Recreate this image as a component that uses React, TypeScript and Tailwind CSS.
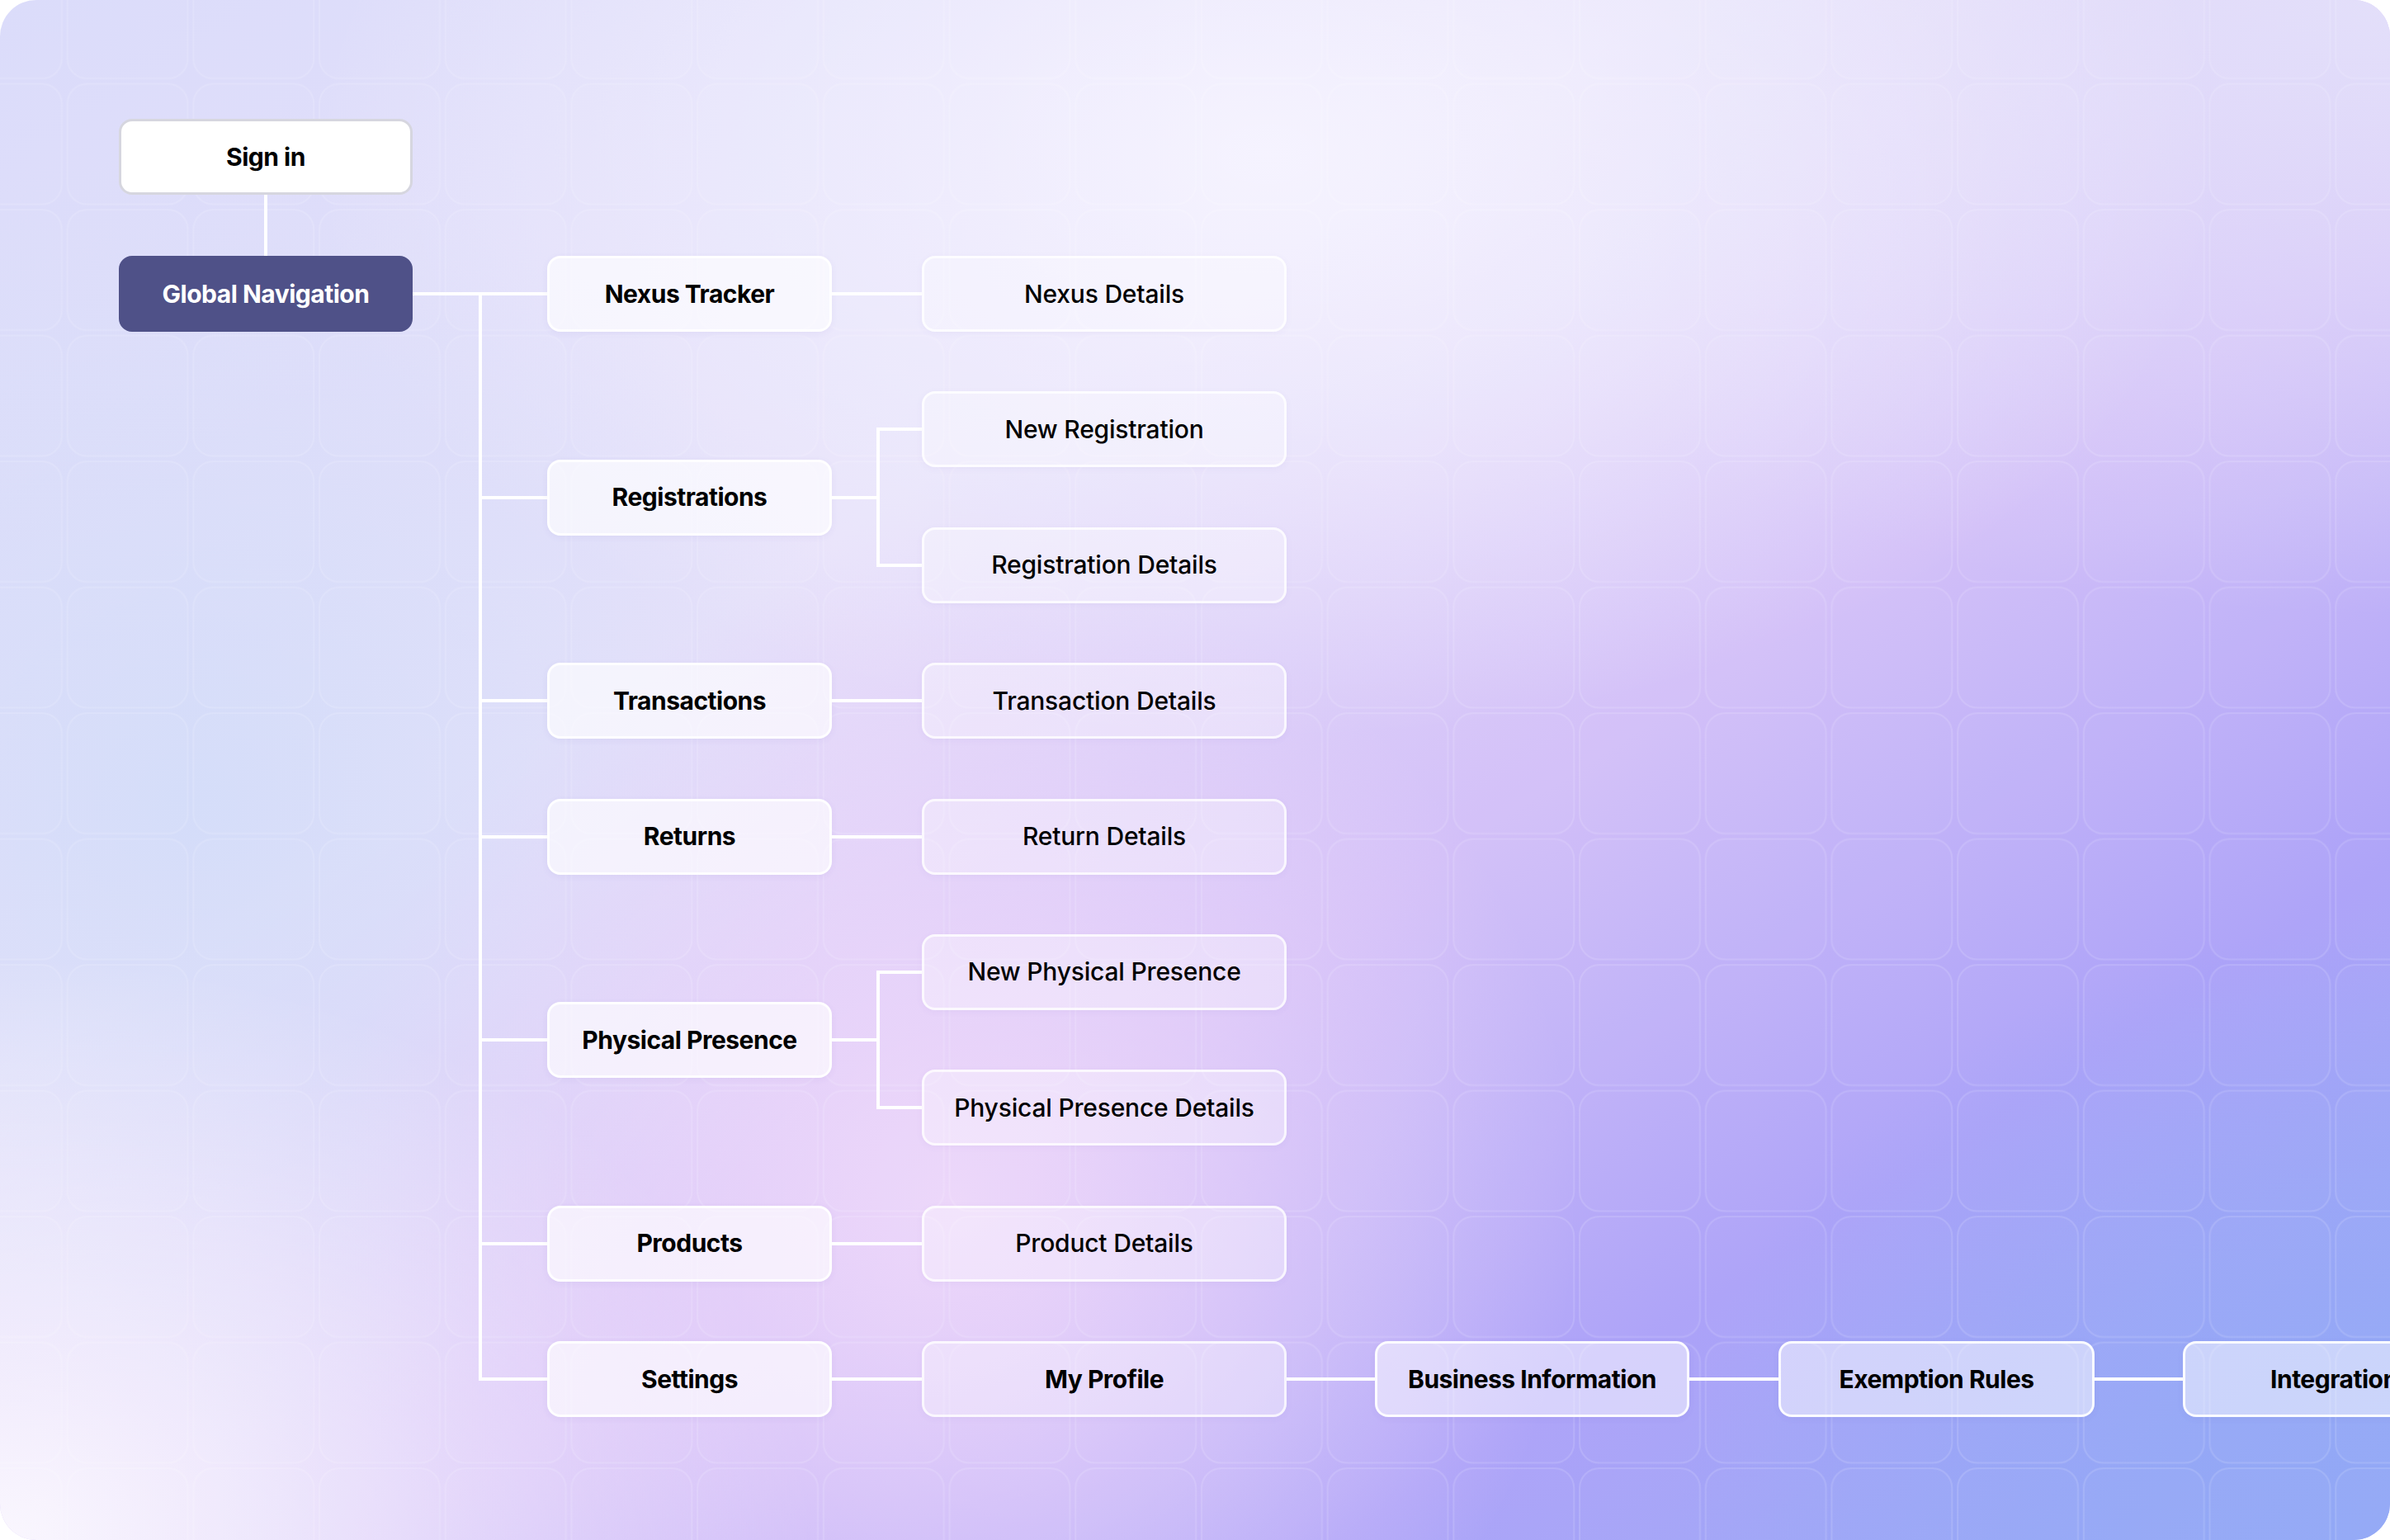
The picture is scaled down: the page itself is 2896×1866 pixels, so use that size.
import React from "react";

type Kind = "root" | "entry" | "primary" | "detail" | "chain" | "detailBold";

const boxStyles: Record<Kind, string> = {
  root: "bg-white border-[3px] border-[#d6d6df] text-black font-bold tracking-[-0.5px]",
  entry: "bg-[#4f5188] border-[3px] border-[#4f5188] text-white font-bold tracking-[-0.5px]",
  primary:
    "bg-white/65 border-[3px] border-white/90 text-black font-bold tracking-[-0.5px] shadow-[0_2px_8px_rgba(90,70,170,0.06)]",
  detail:
    "bg-white/35 border-[3px] border-white/75 text-black font-medium tracking-[-0.2px] shadow-[0_2px_8px_rgba(90,70,170,0.05)]",
  detailBold:
    "bg-white/35 border-[3px] border-white/75 text-black font-bold tracking-[-0.5px] shadow-[0_2px_8px_rgba(90,70,170,0.05)]",
  chain:
    "bg-white/50 border-[3px] border-white/90 text-black font-bold tracking-[-0.5px] shadow-[0_2px_8px_rgba(90,70,170,0.06)]",
};

function Node({ label, kind, width }: { label: string; kind: Kind; width: string }) {
  return (
    <div
      className={`${width} h-[92px] shrink-0 rounded-[16px] flex items-center justify-center text-[30px] whitespace-nowrap ${boxStyles[kind]}`}
    >
      {label}
    </div>
  );
}

function HLine({ width }: { width: string }) {
  return <div className={`${width} h-[4px] bg-white shrink-0`} />;
}

// vertical rail: each row gets a connector cell, spacers keep the line running between rows
function Rail({ cell, rows }: { cell: string; rows: React.ReactNode[] }) {
  return (
    <div className="flex flex-col">
      {rows.map((row, i) => {
        const first = i === 0;
        const last = i === rows.length - 1;
        return (
          <React.Fragment key={i}>
            <div className="flex items-center">
              <div className={`${cell} self-stretch flex flex-col shrink-0`}>
                <div className={`flex-1 border-l-4 ${first ? "border-transparent" : "border-white"}`} />
                <div className="h-[4px] bg-white" />
                <div className={`flex-1 border-l-4 ${last ? "border-transparent" : "border-white"}`} />
              </div>
              {row}
            </div>
            {!last && <div className={`${cell} h-[72.4px] border-l-4 border-white`} />}
          </React.Fragment>
        );
      })}
    </div>
  );
}

function Details({ items }: { items: string[] }) {
  if (items.length === 1) {
    return (
      <div className="flex items-center">
        <HLine width="w-[109px]" />
        <Node label={items[0]} kind="detail" width="w-[442px]" />
      </div>
    );
  }
  return (
    <div className="flex items-center">
      <HLine width="w-[54px]" />
      <Rail
        cell="w-[55px]"
        rows={items.map((it) => (
          <Node key={it} label={it} kind="detail" width="w-[442px]" />
        ))}
      />
    </div>
  );
}

const sections: { label: string; items: string[] }[] = [
  { label: "Nexus Tracker", items: ["Nexus Details"] },
  { label: "Registrations", items: ["New Registration", "Registration Details"] },
  { label: "Transactions", items: ["Transaction Details"] },
  { label: "Returns", items: ["Return Details"] },
  { label: "Physical Presence", items: ["New Physical Presence", "Physical Presence Details"] },
  { label: "Products", items: ["Product Details"] },
];

function SettingsChain() {
  return (
    <div className="flex items-center">
      <HLine width="w-[109px]" />
      <Node label="My Profile" kind="detailBold" width="w-[442px]" />
      <HLine width="w-[107px]" />
      <Node label="Business Information" kind="chain" width="w-[381px]" />
      <HLine width="w-[108px]" />
      <Node label="Exemption Rules" kind="chain" width="w-[383px]" />
      <HLine width="w-[107px]" />
      <Node label="Integrations" kind="chain" width="w-[383px]" />
    </div>
  );
}

function GridPattern() {
  return (
    <svg className="absolute inset-0 w-full h-full pointer-events-none" xmlns="http://www.w3.org/2000/svg">
      <defs>
        <pattern id="tiles" x="77.6" y="97.6" width="152.7" height="152.5" patternUnits="userSpaceOnUse">
          <rect x="4" y="4" width="146" height="146" rx="24" fill="#ffffff" fillOpacity="0.025" stroke="#ffffff" strokeOpacity="0.13" strokeWidth="2" />
        </pattern>
      </defs>
      <rect width="100%" height="100%" fill="url(#tiles)" />
    </svg>
  );
}

export default function App() {
  return (
    <div className="w-[2896px] h-[1866px] bg-white font-['Inter','Liberation_Sans',sans-serif]">
      <div className="relative w-full h-full rounded-[44px] overflow-hidden bg-[linear-gradient(to_bottom_right,#dadbfa_0%,#e6e0fa_35%,#d2bff8_58%,#aca2f8_78%,#93a8f5_100%)]">
        <div className="absolute inset-0 bg-[radial-gradient(ellipse_45%_40%_at_100%_0%,rgba(226,222,250,1)_0%,rgba(226,222,250,0)_100%)]" />
        <div className="absolute inset-0 bg-[radial-gradient(ellipse_40%_38%_at_53%_10%,rgba(246,244,255,0.95)_0%,rgba(246,244,255,0)_100%)]" />
        <div className="absolute inset-0 bg-[radial-gradient(ellipse_28%_42%_at_8%_52%,rgba(210,220,249,0.9)_0%,rgba(210,220,249,0)_100%)]" />
        <div className="absolute inset-0 bg-[radial-gradient(ellipse_34%_38%_at_0%_100%,rgba(250,247,254,1)_0%,rgba(250,247,254,0)_100%)]" />
        <div className="absolute inset-0 bg-[radial-gradient(ellipse_26%_42%_at_40%_78%,rgba(238,216,250,0.95)_0%,rgba(238,216,250,0)_100%)]" />
        <div className="absolute inset-0 bg-[radial-gradient(ellipse_30%_40%_at_100%_100%,rgba(146,168,246,1)_0%,rgba(146,168,246,0)_100%)]" />
        <GridPattern />

        <div className="relative pl-[144px] pt-[144px]">
          <Node label="Sign in" kind="root" width="w-[356px]" />
          <div className="w-[356px] flex justify-center">
            <div className="w-[4px] h-[74px] bg-white" />
          </div>
          <div className="flex items-start">
            <div className="flex items-center">
              <Node label="Global Navigation" kind="entry" width="w-[356px]" />
              <HLine width="w-[80px]" />
            </div>
            <Rail
              cell="w-[83px]"
              rows={[
                ...sections.map((s) => (
                  <div key={s.label} className="flex items-center">
                    <Node label={s.label} kind="primary" width="w-[345px]" />
                    <Details items={s.items} />
                  </div>
                )),
                <div key="settings" className="flex items-center">
                  <Node label="Settings" kind="primary" width="w-[345px]" />
                  <SettingsChain />
                </div>,
              ]}
            />
          </div>
        </div>
      </div>
    </div>
  );
}
